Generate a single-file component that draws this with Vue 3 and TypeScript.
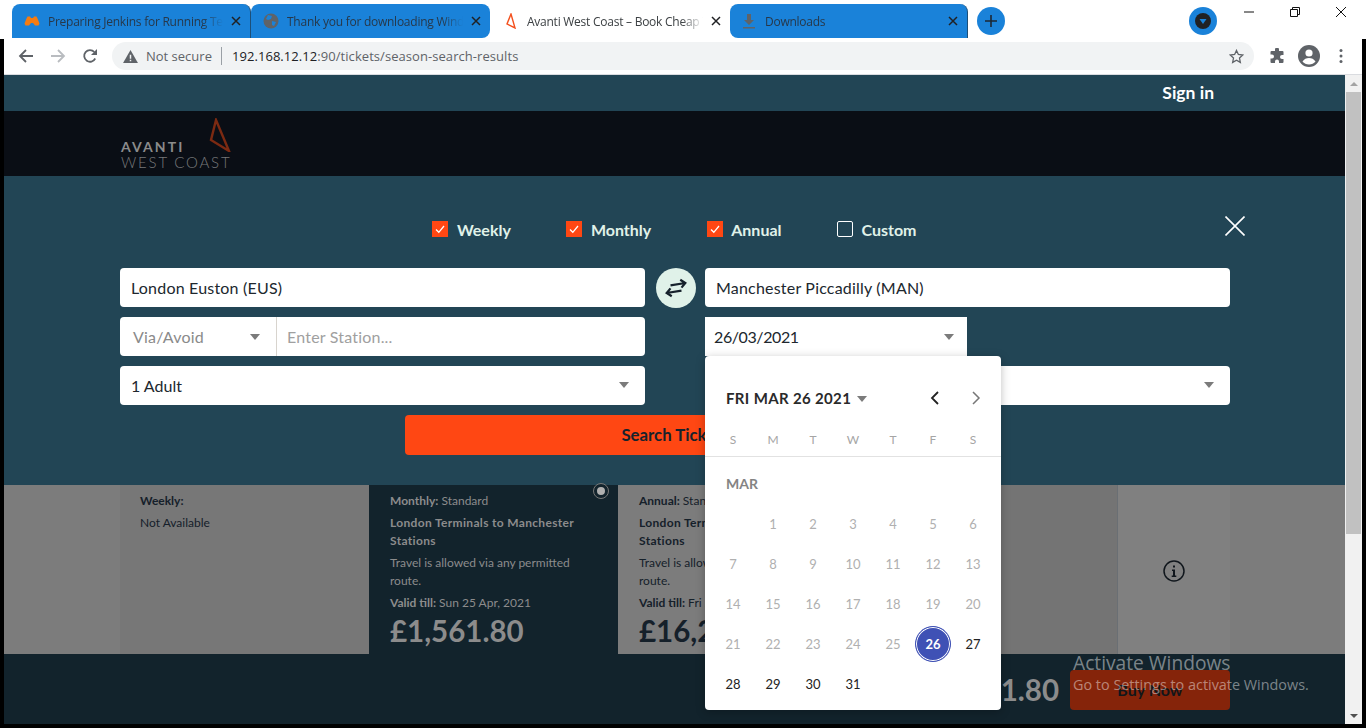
<script setup lang="ts">
interface Tab {
  title: string;
  icon: string;
  active?: boolean;
}

const tabs: Tab[] = [
  { title: "Preparing Jenkins for Running Tests", icon: "game" },
  { title: "Thank you for downloading Windows", icon: "globe" },
  { title: "Avanti West Coast – Book Cheap Train Tickets", icon: "avanti", active: true },
  { title: "Downloads", icon: "download" },
];

const ticketTypes = [
  { label: "Weekly", checked: true },
  { label: "Monthly", checked: true },
  { label: "Annual", checked: true },
  { label: "Custom", checked: false },
];

const weekdays = ["S", "M", "T", "W", "T", "F", "S"];
const days: number[] = [0, ...Array.from({ length: 31 }, (_, i) => i + 1)];
</script>

<template>
  <div class="screen">
    <div class="tabstrip">
      <div
        v-for="tab in tabs"
        :key="tab.title"
        class="tab"
        :class="{ active: tab.active }"
      >
        <svg v-if="tab.icon === 'game'" class="favicon" viewBox="0 0 16 16">
          <path fill="#f57c12" d="M3.500 3.500h2.500l1 1.500h2l1-1.500h2.500l1 2 2 5-1 2h-3.500l-2-2.500H7l-2 2.500H1.500l-1-2 2-5z" />
        </svg>
        <svg v-else-if="tab.icon === 'globe'" class="favicon" viewBox="0 0 16 16">
          <circle cx="8" cy="8" r="7.500" fill="#5f6368" />
          <path fill="#1a82d9" d="M5 2l4 1-1 3-3 1-2-1zM9 8l4 1-2 4-2-1z" />
        </svg>
        <svg v-else-if="tab.icon === 'avanti'" class="favicon" viewBox="0 0 16 16">
          <path fill="none" stroke="#f4511e" stroke-width="1.400" d="M8 1 L4 11 L12 15 Z" />
        </svg>
        <svg v-else class="favicon" viewBox="0 0 16 16">
          <path fill="#5f6368" d="M6 1h4v6h3l-5 5-5-5h3zM2 14h12v1.500H2z" />
        </svg>
        <span class="tab-title">{{ tab.title }}</span>
        <svg class="tab-close" viewBox="0 0 10 10">
          <path d="M1 1l8 8M9 1l-8 8" />
        </svg>
      </div>
      <div class="new-tab">
        <svg viewBox="0 0 14 14" width="14" height="14">
          <path d="M7 1v12M1 7h12" stroke="#1c2733" stroke-width="1.600" />
        </svg>
      </div>
      <div class="chrome-profile">
        <svg viewBox="0 0 16 16" width="16" height="16">
          <circle cx="8" cy="8" r="8" fill="#202124" />
          <path d="M4.500 6h7L8 11z" fill="#1a82d9" />
        </svg>
      </div>
      <div class="win-controls">
        <div class="win-btn">
          <svg viewBox="0 0 10 10" width="10" height="10"><path d="M0 5h10" stroke="#111" /></svg>
        </div>
        <div class="win-btn">
          <svg viewBox="0 0 10 10" width="10" height="10">
            <path d="M0.500 2.500h7v7h-7zM2.500 2.500v-2h7v7h-2" fill="none" stroke="#111" />
          </svg>
        </div>
        <div class="win-btn">
          <svg viewBox="0 0 10 10" width="10" height="10">
            <path d="M0 0l10 10M10 0L0 10" stroke="#111" />
          </svg>
        </div>
      </div>
    </div>

    <div class="frame">
      <div class="toolbar">
        <div class="tool-btn">
          <svg viewBox="0 0 16 16" width="16" height="16">
            <path d="M15 8H2M8 2L2 8l6 6" fill="none" stroke="#5f6368" stroke-width="1.800" />
          </svg>
        </div>
        <div class="tool-btn">
          <svg viewBox="0 0 16 16" width="16" height="16">
            <path d="M1 8h13M8 2l6 6-6 6" fill="none" stroke="#b9bcc0" stroke-width="1.800" />
          </svg>
        </div>
        <div class="tool-btn">
          <svg viewBox="0 0 16 16" width="16" height="16">
            <path d="M13.200 10.500A5.800 5.800 0 1 1 12.300 4" fill="none" stroke="#5f6368" stroke-width="1.800" />
            <path d="M15 1v6H9z" fill="#5f6368" />
          </svg>
        </div>
        <div class="address">
          <svg viewBox="0 0 16 14" width="15" height="13">
            <path d="M8 0l8 14H0z" fill="#5f6368" />
            <path d="M7.200 5h1.600v4.500H7.200zM7.200 10.500h1.600V12H7.200z" fill="#f1f3f4" />
          </svg>
          <span class="not-secure">Not secure</span>
          <span class="addr-sep"></span>
          <span class="url"><b>192.168.12.12</b>:90/tickets/season-search-results</span>
          <svg class="star" viewBox="0 0 16 16" width="15" height="15">
            <path d="M8 1.500l2 4.300 4.700.6-3.500 3.200.9 4.700L8 12l-4.100 2.300.9-4.700L1.300 6.400 6 5.800z" fill="none" stroke="#5f6368" stroke-width="1.400" />
          </svg>
        </div>
        <div class="tool-btn first-ext">
          <svg viewBox="0 0 16 16" width="16" height="16">
            <path fill="#5f6368" d="M6 1.500a2 2 0 0 1 4 0V3h3.500a1 1 0 0 1 1 1v3H13a2 2 0 0 0 0 4h1.500v3a1 1 0 0 1-1 1H10v-1.500a2 2 0 0 0-4 0V15H2.500a1 1 0 0 1-1-1v-3.500H3a2 2 0 0 0 0-4H1.500V4a1 1 0 0 1 1-1H6z" />
          </svg>
        </div>
        <div class="tool-btn">
          <svg viewBox="0 0 22 22" width="22" height="22">
            <circle cx="11" cy="11" r="11" fill="#5f6368" />
            <circle cx="11" cy="8" r="3.600" fill="#fff" />
            <path d="M4.500 16.500c1.500-2.500 4-3.500 6.500-3.500s5 1 6.500 3.500c-1.500 1.800-3.900 3-6.500 3s-5-1.200-6.500-3z" fill="#fff" />
          </svg>
        </div>
        <div class="tool-btn">
          <svg viewBox="0 0 4 16" width="4" height="16">
            <circle cx="2" cy="2.500" r="1.500" fill="#5f6368" />
            <circle cx="2" cy="8" r="1.500" fill="#5f6368" />
            <circle cx="2" cy="13.500" r="1.500" fill="#5f6368" />
          </svg>
        </div>
      </div>

      <div class="viewport">
        <main class="page">
          <div class="topbar"><a class="signin">Sign in</a></div>

          <div class="logobar">
            <div class="logo">
              <span class="logo-avanti">AVANTI</span>
              <span class="logo-west">WEST COAST</span>
              <svg class="logo-mark" viewBox="0 0 22 34" width="22" height="34">
                <path d="M7 2 L2 22 L20 33 Z" fill="none" stroke="#7c2a12" stroke-width="2.400" />
              </svg>
            </div>
          </div>

          <section class="search">
            <div class="types">
              <label v-for="t in ticketTypes" :key="t.label" class="type">
                <span class="box" :class="{ on: t.checked }">
                  <svg v-if="t.checked" viewBox="0 0 16 16" width="16" height="16">
                    <path d="M4 8.500l2.800 2.800L12 5" fill="none" stroke="#fff" stroke-width="1.300" />
                  </svg>
                </span>
                {{ t.label }}
              </label>
            </div>

            <svg class="close" viewBox="0 0 20 20" width="20" height="20">
              <path d="M0.500 0.500l19 19M19.500 0.500l-19 19" stroke="#fff" stroke-width="1.600" />
            </svg>

            <div class="form">
              <div class="field">London Euston (EUS)</div>
              <div class="swap">
                <svg viewBox="0 0 24 20" width="24" height="20">
                  <g transform="rotate(-9 12 10)" fill="none" stroke="#16222c" stroke-width="2.200">
                    <path d="M7 6.500h15M17.500 2.500l4.500 4-4.500 4" />
                    <path d="M17 13.500H2M6.500 9.500L2 13.500l4.500 4" />
                  </g>
                </svg>
              </div>
              <div class="field">Manchester Piccadilly (MAN)</div>

              <div class="field via">
                <div class="via-select">Via/Avoid<i class="caret"></i></div>
                <div class="via-input">Enter Station...</div>
              </div>
              <div></div>
              <div class="field date">26/03/2021<i class="caret"></i></div>

              <div class="field select">1 Adult<i class="caret"></i></div>
              <div></div>
              <div class="field select">No Railcard<i class="caret"></i></div>

              <button class="search-btn">Search Tickets</button>
            </div>
          </section>

          <section class="results">
            <div class="card off">
              <p><b>Weekly:</b></p>
              <p>Not Available</p>
            </div>
            <div class="card selected">
              <span class="radio"></span>
              <p><b>Monthly:</b> Standard</p>
              <p class="route"><b>London Terminals to Manchester Stations</b></p>
              <p>Travel is allowed via any permitted route.</p>
              <p><b>Valid till:</b> Sun 25 Apr, 2021</p>
              <div class="price">£1,561.80</div>
            </div>
            <div class="card">
              <p><b>Annual:</b> Standard</p>
              <p class="route"><b>London Terminals to Manchester Stations</b></p>
              <p>Travel is allowed via any permitted route.</p>
              <p><b>Valid till:</b> Fri 25 Mar, 2022</p>
              <div class="price">£16,261.80</div>
            </div>
            <div class="card blank"></div>
            <div class="info">
              <svg viewBox="0 0 22 22" width="22" height="22">
                <circle cx="11" cy="11" r="10" fill="none" stroke="#10161c" stroke-width="1.500" />
                <path d="M9 9.500h3v6h1.300V17H8.700v-1.500H10V11H9zM10 5.500h2v2h-2z" fill="#10161c" />
              </svg>
            </div>
          </section>

          <div class="buybar">
            <span class="total">£1,561.80</span>
            <button class="buy">Buy Now</button>
          </div>

          <div class="picker">
            <div class="picker-head">
              <span class="picker-date">FRI MAR 26 2021<i class="caret"></i></span>
              <svg class="chev" viewBox="0 0 10 16" width="10" height="16">
                <path d="M8 2L2 8l6 6" fill="none" stroke="#222" stroke-width="1.800" />
              </svg>
              <svg class="chev next" viewBox="0 0 10 16" width="10" height="16">
                <path d="M2 2l6 6-6 6" fill="none" stroke="#777" stroke-width="1.500" />
              </svg>
            </div>
            <div class="weekdays">
              <span v-for="(d, i) in weekdays" :key="i">{{ d }}</span>
            </div>
            <div class="month">MAR</div>
            <div class="days">
              <span
                v-for="d in days"
                :key="d"
                class="day"
                :class="{ past: d < 26, today: d === 26 }"
              >{{ d || "" }}</span>
            </div>
          </div>

          <div class="watermark">
            <div class="wm-title">Activate Windows</div>
            <div class="wm-sub">Go to Settings to activate Windows.</div>
          </div>
        </main>

        <div class="scrollbar">
          <i class="arrow-up"></i>
          <div class="thumb"></div>
          <i class="arrow-down"></i>
        </div>
      </div>
    </div>
  </div>
</template>

<style>
html,
body {
  margin: 0;
  overflow: hidden;
  background: #000;
}
</style>

<style scoped>
.screen {
  width: 1366px;
  height: 728px;
  display: flex;
  flex-direction: column;
  overflow: hidden;
  font-family: Lato, "Liberation Sans", sans-serif;
  background: #000;
}

.tabstrip {
  height: 39px;
  flex: none;
  background: #fff;
  display: flex;
  align-items: flex-start;
  padding-left: 12px;
  box-sizing: border-box;
  font-family: "Open Sans", sans-serif;
}

.tab {
  width: 239px;
  height: 34px;
  margin-top: 4px;
  box-sizing: border-box;
  background: #1a82d9;
  border-radius: 8px 8px 0 0;
  border-right: 1px solid #1d4f78;
  display: flex;
  align-items: center;
  padding: 0 9px 0 12px;
  color: #27384a;
  font-size: 12px;
  letter-spacing: -0.250px;
}

.tab:nth-child(2) {
  border-right: none;
  border-radius: 8px 8px 8px 0;
}

.tab.active {
  background: #fff;
  border: none;
  color: #3c4043;
  width: 240px;
  padding-left: 13px;
}

.tab:nth-child(4) {
  width: 238px;
  padding-left: 11px;
  border-radius: 8px 8px 0 8px;
}

.favicon {
  width: 16px;
  height: 16px;
  flex: none;
  margin-right: 8px;
}

.tab-title {
  flex: 1;
  white-space: nowrap;
  overflow: hidden;
  mask-image: linear-gradient(to right, #000 88%, transparent);
}

.tab-close {
  width: 10px;
  height: 10px;
  flex: none;
  margin-left: 8px;
  fill: none;
  stroke: #202124;
  stroke-width: 1.500;
}

.new-tab {
  width: 28px;
  height: 28px;
  margin: 7px 0 0 9px;
  border-radius: 50%;
  background: #1a82d9;
  display: flex;
  align-items: center;
  justify-content: center;
}

.chrome-profile {
  width: 28px;
  height: 28px;
  margin: 7px 0 0 184px;
  border-radius: 50%;
  background: #1a82d9;
  display: flex;
  align-items: center;
  justify-content: center;
}

.win-controls {
  display: flex;
  margin-left: auto;
  margin-right: 2px;
}

.win-btn {
  width: 46px;
  height: 24px;
  display: flex;
  align-items: center;
  justify-content: center;
}

.frame {
  flex: 1;
  min-height: 0;
  padding: 0 4px 4px;
  display: flex;
  flex-direction: column;
}

.toolbar {
  height: 36px;
  flex: none;
  box-sizing: border-box;
  background: #fff;
  border-bottom: 1px solid #dadce0;
  display: flex;
  align-items: center;
  padding: 0 5px 1px 6px;
}

.tool-btn {
  width: 32px;
  height: 32px;
  flex: none;
  display: flex;
  align-items: center;
  justify-content: center;
}

.first-ext {
  margin-left: 7px;
}

.address {
  flex: 1;
  height: 28px;
  margin-left: 6px;
  border-radius: 14px;
  background: #f1f3f4;
  display: flex;
  align-items: center;
  padding: 0 10px 0 11px;
  font-family: "Open Sans", sans-serif;
  font-size: 13px;
  color: #5f6368;
}

.not-secure {
  margin-left: 8px;
}

.addr-sep {
  width: 1px;
  height: 18px;
  background: #9aa0a6;
  margin: 0 9px;
}

.url {
  margin-left: 1px;
  letter-spacing: 0.060px;
}

.url b {
  font-weight: 400;
  color: #202124;
}

.star {
  margin-left: auto;
}

.viewport {
  flex: 1;
  min-height: 0;
  display: flex;
}

.page {
  flex: 1;
  position: relative;
  display: flex;
  flex-direction: column;
  overflow: hidden;
}

.scrollbar {
  width: 17px;
  flex: none;
  background: #f1f1f1;
  display: flex;
  flex-direction: column;
  align-items: center;
}

.thumb {
  width: 15px;
  height: 442px;
  margin-top: 6px;
  background: #c1c1c1;
}

.arrow-up,
.arrow-down {
  width: 0;
  height: 0;
  border-left: 4px solid transparent;
  border-right: 4px solid transparent;
}

.arrow-up {
  margin-top: 7px;
  border-bottom: 4px solid #a3a3a3;
}

.arrow-down {
  margin-top: auto;
  margin-bottom: 6px;
  border-top: 4px solid #505050;
}

.topbar {
  height: 36px;
  flex: none;
  box-sizing: border-box;
  background: #224555;
  display: flex;
  align-items: center;
  justify-content: flex-end;
  padding: 0 131px 2px 0;
}

.signin {
  color: #fff;
  font-size: 17.500px;
  font-weight: 700;
}

.logobar {
  height: 65px;
  flex: none;
  background: #0a0e15;
  padding-left: 117px;
}

.logo {
  position: relative;
  width: 110px;
  height: 65px;
  display: flex;
  flex-direction: column;
  padding-top: 28px;
  box-sizing: border-box;
}

.logo-avanti {
  font-size: 14px;
  line-height: 16px;
  font-weight: 700;
  letter-spacing: 2.100px;
  color: #8b8b8b;
}

.logo-west {
  font-size: 15px;
  line-height: 15px;
  font-weight: 300;
  letter-spacing: 1.800px;
  color: #77787a;
  white-space: nowrap;
}

.logo-mark {
  position: absolute;
  left: 88px;
  top: 7px;
}

.search {
  height: 309px;
  flex: none;
  box-sizing: border-box;
  background: #224555;
  position: relative;
  padding: 43px 116px 0;
}

.types {
  display: flex;
  justify-content: center;
  gap: 55.500px;
  height: 20px;
}

.type {
  display: flex;
  align-items: center;
  gap: 8.500px;
  font-size: 16px;
  font-weight: 700;
  color: #e0f2e9;
}

.box {
  width: 16px;
  height: 16px;
  box-sizing: border-box;
  border: 1px solid #fff;
  border-radius: 2px;
}

.box.on {
  border: none;
  border-radius: 0;
  background: #ff4713;
}

.close {
  position: absolute;
  left: 1221px;
  top: 40px;
}

.form {
  margin-top: 29px;
  display: grid;
  grid-template-columns: 525px 60px 525px;
  grid-auto-rows: 39px;
  gap: 10px 0;
}

.field {
  background: #fff;
  border-radius: 4px;
  display: flex;
  align-items: center;
  padding: 0 11px;
  font-size: 16px;
  letter-spacing: 0.200px;
  color: #20272e;
  position: relative;
}

.swap {
  width: 40px;
  height: 40px;
  margin-left: 2px;
  border-radius: 50%;
  background: #e0f2e9;
  justify-self: center;
  display: flex;
  align-items: center;
  justify-content: center;
}

.via {
  padding: 0;
}

.via-select {
  width: 157px;
  height: 100%;
  box-sizing: border-box;
  padding: 0 13px;
  border-right: 1px solid #d8d4ce;
  display: flex;
  align-items: center;
  justify-content: space-between;
  color: #8a8a8a;
}

.via-input {
  padding: 0 10px;
  color: #a0a0a0;
}

.caret {
  display: block;
  width: 0;
  height: 0;
  border-left: 5.500px solid transparent;
  border-right: 5.500px solid transparent;
  border-top: 6px solid #7b7b7b;
}

.via .caret {
  margin-right: 3px;
}

.select,
.date {
  justify-content: space-between;
  padding-right: 16px;
}

.select {
  padding-bottom: 1px;
  letter-spacing: 0;
}

.date {
  width: 262px;
  box-sizing: border-box;
  padding-left: 9px;
  padding-right: 13px;
  border-radius: 0;
  letter-spacing: -0.400px;
}

.search-btn {
  grid-column: 1 / -1;
  justify-self: center;
  width: 540px;
  height: 40px;
  padding-bottom: 2px;
  border: none;
  border-radius: 4px;
  background: #ff4713;
  color: #16222c;
  font: 700 16.800px Lato, sans-serif;
}

.results {
  height: 169px;
  flex: none;
  background: #7c7c7c;
  display: grid;
  grid-template-columns: 249px 249px 249px 251px 112px;
  padding-left: 116px;
}

.card {
  position: relative;
  box-sizing: border-box;
  padding: 7px 28px 0 21px;
  font-size: 12px;
  line-height: 18px;
  color: #15202a;
}

.card p {
  margin: 0 0 4px;
}

.card .route b {
  letter-spacing: 0.330px;
}

.off {
  background: #777;
  padding-left: 20px;
}

.selected {
  background: #12232c;
  color: #8c8c8c;
}

.blank {
  border-right: 1px solid #6a6f74;
  background: #747474;
}

.radio {
  position: absolute;
  right: 10px;
  top: -1px;
  width: 8px;
  height: 8px;
  border-radius: 50%;
  background: #b0b0b0;
  border: 3px solid #12232c;
  outline: 1px solid #777;
}

.price {
  font-size: 29.500px;
  line-height: 36px;
  font-weight: 700;
  margin-top: -3px;
  white-space: nowrap;
}

.info {
  background: #808080;
  display: flex;
  align-items: center;
  justify-content: center;
  padding-top: 2px;
}

.buybar {
  height: 70px;
  flex: none;
  background: #12232c;
  display: flex;
  align-items: center;
  justify-content: flex-end;
  gap: 11px;
  padding: 0 115px 0 0;
}

.total {
  font-size: 29.500px;
  font-weight: 700;
  color: #8c8c8c;
}

.buy {
  width: 160px;
  height: 40px;
  margin-top: 1px;
  border: none;
  border-radius: 4px;
  background: #85240a;
  color: #12161a;
  font: 700 16px Lato, sans-serif;
}

.picker {
  position: absolute;
  left: 701px;
  top: 281px;
  width: 296px;
  height: 354px;
  background: #fff;
  border-radius: 4px;
  box-shadow: 0 2px 10px rgba(0, 0, 0, 0.25);
  z-index: 2;
  box-sizing: border-box;
}

.picker-head {
  display: flex;
  align-items: center;
  height: 32px;
  margin-top: 26px;
  padding: 0 20px 0 21px;
}

.picker-date {
  display: flex;
  align-items: center;
  gap: 6px;
  font-size: 15px;
  font-weight: 700;
  letter-spacing: 0.350px;
  color: #2a2a2a;
}

.picker-date .caret {
  margin-top: 2px;
}

.chev {
  margin-left: auto;
}

.next {
  margin-left: 31px;
}

.weekdays {
  margin-top: 18px;
  height: 25px;
  box-sizing: border-box;
  border-bottom: 1px solid #e2e2e2;
  padding: 0 8px;
  display: grid;
  grid-template-columns: repeat(7, 40px);
  text-align: center;
  font-size: 12px;
  line-height: 16px;
  color: #a5a5a5;
}

.month {
  margin-top: 18px;
  padding-left: 21px;
  font-size: 14px;
  line-height: 18px;
  font-weight: 700;
  color: #848484;
}

.days {
  margin-top: 11px;
  padding: 0 8px;
  display: grid;
  grid-template-columns: repeat(7, 40px);
  grid-auto-rows: 40px;
}

.day {
  display: flex;
  align-items: center;
  justify-content: center;
  font-size: 13px;
  color: #222;
}

.day.past {
  color: #b0b0b0;
}

.day.today {
  margin: 2px;
  border-radius: 50%;
  border: 1px solid #3f51b5;
  box-sizing: border-box;
  background: #3f51b5;
  box-shadow: inset 0 0 0 1px #fff;
  color: #fff;
  font-weight: 700;
}

.watermark {
  position: absolute;
  left: 1069px;
  top: 575px;
  z-index: 3;
  font-family: "Open Sans", sans-serif;
  color: rgba(255, 255, 255, 0.45);
  white-space: nowrap;
  pointer-events: none;
}

.wm-title {
  font-size: 19.200px;
  line-height: 25px;
}

.wm-sub {
  font-size: 14.400px;
  line-height: 20px;
}
</style>
